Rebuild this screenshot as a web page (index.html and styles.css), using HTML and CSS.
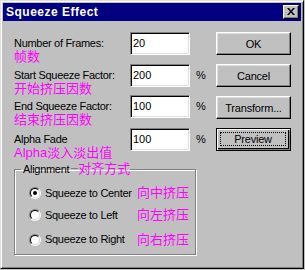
FILE: index.html
```html
<!DOCTYPE html>
<html lang="zh">

<head>
  <meta charset="UTF-8">
  <title>Squeeze Effect</title>
  <link rel="stylesheet" href="styles.css">
</head>

<body>
  <div class="window">
    <div class="titlebar">
      <span class="title">Squeeze Effect</span>
      <span class="close">
        <svg width="8" height="7" viewBox="0 0 8 7"><path d="M0 0h2l2 2.5 2-2.5h2L5 3.5 8 7H6L4 4.5 2 7H0l3-3.5z" fill="#000"/></svg>
      </span>
    </div>

    <div class="body">
      <div class="fields">
        <div class="row">
          <div class="label">Number of Frames:<div class="cn">帧数</div></div>
          <input class="field" type="text" value="20">
          <span class="unit"></span>
        </div>

        <div class="row row-short">
          <div class="label">Start Squeeze Factor:<div class="cn">开始挤压因数</div></div>
          <input class="field" type="text" value="200">
          <span class="unit">%</span>
        </div>

        <div class="row row-tall">
          <div class="label">End Squeeze Factor:<div class="cn">结束挤压因数</div></div>
          <input class="field" type="text" value="100">
          <span class="unit">%</span>
        </div>

        <div class="row">
          <div class="label">Alpha Fade<div class="cn">Alpha淡入淡出值</div></div>
          <input class="field" type="text" value="100">
          <span class="unit">%</span>
        </div>

        <fieldset class="group">
          <legend>Alignment<span class="dash"></span><span class="cn">对齐方式</span></legend>

          <label class="option">
            <span class="radio checked"></span>
            <span class="opt-text">Squeeze to Center</span>
            <span class="cn">向中挤压</span>
          </label>
          <label class="option">
            <span class="radio"></span>
            <span class="opt-text">Squeeze to Left</span>
            <span class="cn">向左挤压</span>
          </label>
          <label class="option option-last">
            <span class="radio"></span>
            <span class="opt-text">Squeeze to Right</span>
            <span class="cn">向右挤压</span>
          </label>
        </fieldset>
      </div>

      <div class="buttons">
        <button class="btn">OK</button>
        <button class="btn">Cancel</button>
        <button class="btn">Transform...</button>
        <button class="btn btn-default"><span class="focus">Preview</span></button>
      </div>
    </div>
  </div>
</body>

</html>
```

FILE: styles.css
```css
body {
  margin: 0;
  background-color: #c0c0c0;
  font-family: "Liberation Sans", Arial, "Noto Sans CJK SC", sans-serif;
  font-size: 11px;
  color: #000;
}

.window {
  width: 304px;
  height: 269px;
  box-sizing: border-box;
  border: 1px solid;
  border-color: #dfdfdf #000 #000 #dfdfdf;
  box-shadow: inset 1px 1px 0 #fff, inset -1px -1px 0 #808080;
  padding: 2px;
  background-color: #c0c0c0;
}

.titlebar {
  height: 18px;
  background-color: #000080;
  display: flex;
  align-items: center;
  justify-content: space-between;
  padding: 0 2px 0 3px;
}

.title {
  color: #fff;
  font-weight: bold;
  font-size: 12px;
  line-height: 18px;
  letter-spacing: 0.5px;
}

.close {
  width: 16px;
  height: 14px;
  box-sizing: border-box;
  background-color: #c0c0c0;
  border: 1px solid;
  border-color: #fff #000 #000 #fff;
  box-shadow: inset -1px -1px 0 #808080;
  display: flex;
  align-items: center;
  justify-content: center;
  padding: 0 1px 1px 0;
}

.close svg {
  display: block;
}

.body {
  display: flex;
  padding: 11px 0 0 11px;
}

.fields {
  display: flex;
  flex-direction: column;
  width: 202px;
}

.row {
  display: grid;
  grid-template-columns: 116px 60px 26px;
  height: 32px;
}

.row-short {
  height: 31px;
}

.row-tall {
  height: 33px;
}

.label {
  padding-top: 5px;
  line-height: 13px;
  letter-spacing: -0.3px;
}

.cn {
  color: #ff00ff;
  font-family: "Liberation Sans", "Noto Sans CJK SC", sans-serif;
  font-size: 13px;
  line-height: 14px;
  letter-spacing: 0;
}

.field {
  width: 60px;
  height: 23px;
  box-sizing: border-box;
  margin: 0;
  padding: 2px 2px 4px;
  border: 1px solid;
  border-color: #808080 #fff #fff #808080;
  box-shadow: inset 1px 1px 0 #000, inset -1px -1px 0 #dfdfdf;
  background-color: #fff;
  font-family: inherit;
  font-size: 11px;
  line-height: 13px;
  outline: none;
}

.unit {
  padding: 5px 0 0 6px;
  line-height: 13px;
}

.group {
  width: 182px;
  box-sizing: border-box;
  margin: 2px 0 0;
  padding: 6px 0 1px 0;
  border: 1px solid #808080;
  box-shadow: inset 1px 1px 0 #fff, 1px 1px 0 #fff;
}

.group legend {
  margin-left: 6px;
  padding: 0 0 0 2px;
  line-height: 13px;
  letter-spacing: -0.3px;
  display: flex;
  align-items: center;
}

.dash {
  width: 7px;
  height: 1px;
  margin-left: 2px;
  border-top: 1px solid #808080;
  border-bottom: 1px solid #fff;
  margin-top: 1px;
}

.option {
  display: grid;
  grid-template-columns: 12px 92px auto;
  column-gap: 4px;
  align-items: center;
  height: 22px;
  padding-left: 14px;
}

.option-last {
  height: 27px;
}

.opt-text {
  letter-spacing: -0.3px;
  line-height: 13px;
}

.option .cn {
  margin-left: -4px;
}

.radio {
  width: 12px;
  height: 12px;
  box-sizing: border-box;
  border-radius: 50%;
  border: 1px solid;
  border-color: #808080 #fff #fff #808080;
  position: relative;
}

.radio::before {
  content: "";
  position: absolute;
  inset: 0;
  border-radius: 50%;
  border: 1px solid;
  border-color: #000 #dfdfdf #dfdfdf #000;
  background-color: #fff;
}

.radio.checked::after {
  content: "";
  position: absolute;
  left: 3px;
  top: 3px;
  width: 4px;
  height: 4px;
  border-radius: 50%;
  background-color: #000;
}

.buttons {
  display: flex;
  flex-direction: column;
  gap: 9px;
}

.btn {
  width: 75px;
  height: 23px;
  box-sizing: border-box;
  margin: 0;
  padding: 0;
  background-color: #c0c0c0;
  border: 1px solid;
  border-color: #fff #000 #000 #fff;
  box-shadow: inset -1px -1px 0 #808080, inset 1px 1px 0 #dfdfdf;
  font-family: inherit;
  font-size: 11px;
  color: #000;
  letter-spacing: -0.2px;
}

.btn-default {
  border: 1px solid #000;
  box-shadow: inset 1px 1px 0 #fff, inset -1px -1px 0 #808080, inset -2px -2px 0 #000;
  padding: 3px 4px 4px 3px;
}

.focus {
  display: block;
  height: 100%;
  box-sizing: border-box;
  border: 1px dotted #000;
  line-height: 13px;
}
```
